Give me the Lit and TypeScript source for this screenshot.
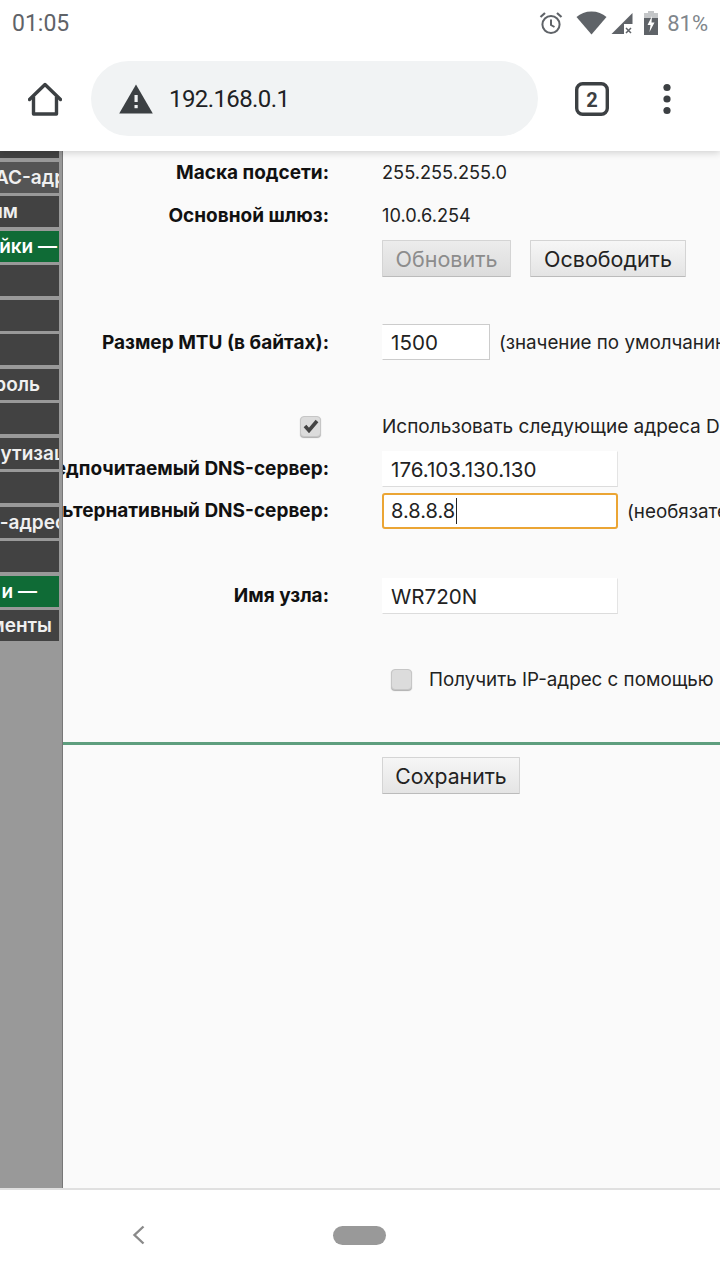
import { LitElement, html, css } from "lit";
import { customElement } from "lit/decorators.js";

// [label, kind, x at which the clipped label ends]
const rows: [string, string, number][] = [
  ["", "dark", 0],
  ["AC-адр", "mid", 66],
  ["им", "dark", 18],
  ["йки —", "green", 57],
  ["", "dark", 0],
  ["", "dark", 0],
  ["", "dark", 0],
  ["роль", "dark", 40],
  ["", "dark", 0],
  ["утизац", "dark", 66],
  ["", "dark", 0],
  ["-адрес", "dark", 66],
  ["", "dark", 0],
  ["и —", "green", 37],
  ["менты", "dark", 52],
];

@customElement("app-root")
export class AppRoot extends LitElement {
  static styles = css`
    :host {
      display: flex;
      flex-direction: column;
      width: 720px;
      height: 1280px;
      overflow: hidden;
      background: #fff;
      font-family: "Inter", "Liberation Sans", sans-serif;
      color: #1c1c1c;
    }
    .status {
      height: 48px;
      flex: none;
      display: flex;
      align-items: center;
      padding: 0 12px 2px;
      box-sizing: border-box;
      color: #5f6368;
      font-family: "Roboto", sans-serif;
      font-size: 23px;
      background: #fff;
      position: relative;
      z-index: 4;
    }
    .status .right {
      margin-left: auto;
      display: flex;
      align-items: center;
    }
    .status .pct { margin-left: 9px; color: #80868b; font-size: 22px; }
    .toolbar {
      height: 103px;
      flex: none;
      display: flex;
      align-items: center;
      position: relative;
      z-index: 3;
      background: #fff;
      box-shadow: 0 2px 7px rgba(0,0,0,0.16);
      padding-bottom: 2px;
      box-sizing: border-box;
    }
    .home { margin-left: 28px; width: 34px; height: 34px; }
    .omni {
      margin-left: 29px;
      width: 447px;
      height: 75px;
      border-radius: 38px;
      background: #f1f3f4;
      display: flex;
      align-items: center;
      padding-left: 28px;
      box-sizing: border-box;
      font-family: "Roboto", sans-serif;
      font-size: 24px;
      letter-spacing: -0.6px;
      color: #202124;
    }
    .omni span { margin-left: 16px; }
    .tab { margin-left: 37px; width: 34px; height: 34px; }
    .more { margin-left: 41px; width: 34px; height: 34px; }
    .view {
      height: 1039px;
      flex: none;
      display: flex;
      background: #fafafa;
      border-bottom: 2px solid #e0e0e0;
      box-sizing: border-box;
    }
    .side {
      flex: none;
      box-sizing: border-box;
      background: #999;
      border-right: 1px solid #777;
      width: 63px;
      padding-right: 3px;
      display: flex;
      flex-direction: column;
      overflow: hidden;
      gap: 3.5px;
    }
    .item {
      height: 31px;
      flex: none;
      display: flex;
      align-items: center;
      justify-content: flex-end;
      overflow: hidden;
      white-space: nowrap;
      font-weight: 600;
      font-size: 19px;
      color: #f0f0f0;
      background: #424242;
    }
    .item:first-child { margin-top: -24px; }
    .item.mid { background: #555; }
    .item.green { background: #0f6b36; color: #fff; }
    .main {
      flex: 1;
      min-width: 0;
      overflow: hidden;
      display: flex;
      flex-direction: column;
    }
    .row {
      display: grid;
      grid-template-columns: 266px 1fr;
      column-gap: 53px;
      align-items: center;
      white-space: nowrap;
    }
    .row .label {
      font-weight: 700;
      font-size: 19px;
      color: #111;
      display: flex;
      justify-content: flex-end;
    }
    .row .label.up { position: relative; top: -1px; }
    .row .val { display: flex; align-items: center; color: #222; font-size: 18.8px; }
    .row .val.num { font-size: 18.2px; position: relative; top: -1px; }
    .row .val.wide { font-size: 19px; }
    .input {
      box-sizing: border-box;
      background: #fff;
      border: 1px solid transparent;
      border-right-color: #e4e4e4;
      border-bottom-color: #dcdcdc;
      height: 36px;
      display: flex;
      align-items: center;
      padding-left: 8px;
      font-size: 20.6px;
      color: #222;
    }
    .input.w { width: 236px; }
    .input.mtu { width: 108px; border-color: #ccc; border-left-color: transparent; }
    .input.focus {
      border: 2px solid #eba534;
      border-radius: 3px;
      padding-left: 7px;
      font-size: 20px;
    }
    .caret { width: 1px; height: 26px; background: #222; margin-left: 1px; }
    .hint { margin-left: 9px; }
    .btn {
      box-sizing: border-box;
      height: 37px;
      display: inline-flex;
      align-items: center;
      justify-content: center;
      border: 1px solid #d4d4d4;
      border-bottom-color: #bbb;
      border-radius: 1px;
      background: linear-gradient(#f6f6f6, #e4e4e4);
      font-size: 21.5px;
      color: #222;
    }
    .btn.off { color: #8c8c8c; background: linear-gradient(#ececec, #dcdcdc); width: 129px; }
    .btn.rel { width: 156px; margin-left: 19px; }
    .btn.save { width: 138px; font-size: 21.2px; }
    .cb {
      flex: none;
      width: 21px;
      height: 21px;
      box-sizing: border-box;
      border-radius: 4px;
      background: #dcdcdc;
      border: 1px solid #c6c6c6;
      box-shadow: 0 1px 1px rgba(0,0,0,0.3);
      display: flex;
      align-items: center;
      justify-content: center;
    }
    .r1 { height: 43px; }
    .cbcell { display: flex; justify-content: flex-end; padding-right: 8px; }
    .chkrow { display: flex; align-items: center; padding-left: 328px; color: #222; font-size: 18.8px; white-space: nowrap; height: 24px; }
    .chkrow .text { margin-left: 17px; }
    hr {
      border: none;
      margin: 0;
      height: 3px;
      background: #5e9e7e;
      flex: none;
    }
    .nav {
      flex: 1;
      display: flex;
      align-items: center;
    }
    .nav svg { margin-left: 132px; }
    .pill { margin-left: 188px; width: 53px; height: 19px; border-radius: 10px; background: #999; }
  `;

  render() {
    return html`
      <div class="status">
        <span>01:05</span>
        <div class="right">
          <svg width="24" height="24" viewBox="0 0 24 24" fill="none" stroke="#5f6368" stroke-width="2">
            <circle cx="12" cy="13.5" r="8.6" />
            <path d="M12 8.5v5.5l3.5 2" />
            <path d="M1.5 6L6 2M22.5 6L18 2" stroke-width="2.2" />
          </svg>
          <svg style="margin-left:13px" width="31" height="24" viewBox="0 0 31 24">
            <path d="M0.5 6C4.5 2.5 9.5 0.5 15.5 0.5S26.5 2.5 30.5 6L15.5 23.5z" fill="#5f6368" />
          </svg>
          <svg style="margin-left:4px" width="22" height="24" viewBox="0 0 22 24">
            <path d="M0.5 23L21.5 2V13H13V23z" fill="#5f6368" />
            <path d="M15 17l5 5M20 17l-5 5" stroke="#5f6368" stroke-width="1.5" />
          </svg>
          <svg style="margin-left:11px" width="14" height="24" viewBox="0 0 14 24">
            <path d="M4 0h6v2h4v5H0V2h4z" fill="#c4c6c8" />
            <path d="M0 7h14v17H0z" fill="#5f6368" />
            <path d="M8 5L3.5 14H6.5L5.5 21L10.5 11.5H7.5z" fill="#fff" />
          </svg>
          <span class="pct">81%</span>
        </div>
      </div>
      <div class="toolbar">
        <svg class="home" viewBox="0 0 34 34" fill="none" stroke="#3c4043" stroke-width="3.4" stroke-linejoin="round">
          <path d="M1.5 17.5L17 2.5L32.5 17.5" stroke-linecap="round" />
          <path d="M5.5 14.5V32H28.5V14.5" />
        </svg>
        <div class="omni">
          <svg width="34" height="30" viewBox="0 0 34 30">
            <path d="M17 0.5L33.8 29.5H0.2z" fill="#3c4043" />
            <rect x="15.5" y="11" width="3.2" height="7" fill="#f1f3f4" />
            <rect x="15.5" y="21" width="3.2" height="3.2" fill="#f1f3f4" />
          </svg>
          <span>192.168.0.1</span>
        </div>
        <svg class="tab" viewBox="0 0 34 34">
          <rect x="1.7" y="1.7" width="30.6" height="30.6" rx="6" fill="none" stroke="#3c4043" stroke-width="3.4" />
          <text x="17" y="24.5" text-anchor="middle" font-family="Roboto, sans-serif" font-weight="700" font-size="20" fill="#3c4043">2</text>
        </svg>
        <svg class="more" viewBox="0 0 34 34" fill="#3c4043">
          <circle cx="17" cy="5.5" r="3.6" />
          <circle cx="17" cy="17" r="3.6" />
          <circle cx="17" cy="28.5" r="3.6" />
        </svg>
      </div>
      <div class="view">
        <div class="side">
          ${rows.map(
            ([t, k, end]) => html`<div class="item ${k}"><span style="margin-right:${59 - end}px">${t}</span></div>`
          )}
        </div>
        <div class="main">
          <div class="row r1"><div class="label">Маска подсети:</div><div class="val num">255.255.255.0</div></div>
          <div class="row r1"><div class="label">Основной шлюз:</div><div class="val num">10.0.6.254</div></div>
          <div class="row" style="margin-top:3px"><div></div><div class="val"><div class="btn off">Обновить</div><div class="btn rel">Освободить</div></div></div>
          <div class="row" style="margin-top:47px"><div class="label">Размер MTU (в байтах):</div><div class="val"><div class="input mtu">1500</div><span class="hint">(значение по умолчанию — 1500)</span></div></div>
          <div class="row" style="margin-top:53px;height:26px"><div class="cbcell"><div class="cb"><svg width="16" height="14" viewBox="0 0 16 14"><path d="M2 7l4 4.5L14 2" fill="none" stroke="#444" stroke-width="3.6" /></svg></div></div><div class="val wide">Использовать следующие адреса DNS-серверов:</div></div>
          <div class="row" style="margin-top:12px"><div class="label up">Предпочитаемый DNS-сервер:</div><div class="val"><div class="input w">176.103.130.130</div></div></div>
          <div class="row" style="margin-top:6px"><div class="label up">Альтернативный DNS-сервер:</div><div class="val"><div class="input w focus">8.8.8.8<span class="caret"></span></div><span class="hint">(необязательно)</span></div></div>
          <div class="row" style="margin-top:49px"><div class="label up">Имя узла:</div><div class="val"><div class="input w">WR720N</div></div></div>
          <div class="chkrow" style="margin-top:53px"><div class="cb"></div><div class="text">Получить IP-адрес с помощью Unicast</div></div>
          <hr style="margin-top:51px" />
          <div class="row" style="margin-top:12px"><div></div><div class="val"><div class="btn save">Сохранить</div></div></div>
        </div>
      </div>
      <div class="nav">
        <svg width="13" height="20" viewBox="0 0 13 20" fill="none" stroke="#8a8a8a" stroke-width="2.4"><path d="M11.5 1.5L2.5 10L11.5 18.5" /></svg>
        <div class="pill"></div>
      </div>
    `;
  }
}
